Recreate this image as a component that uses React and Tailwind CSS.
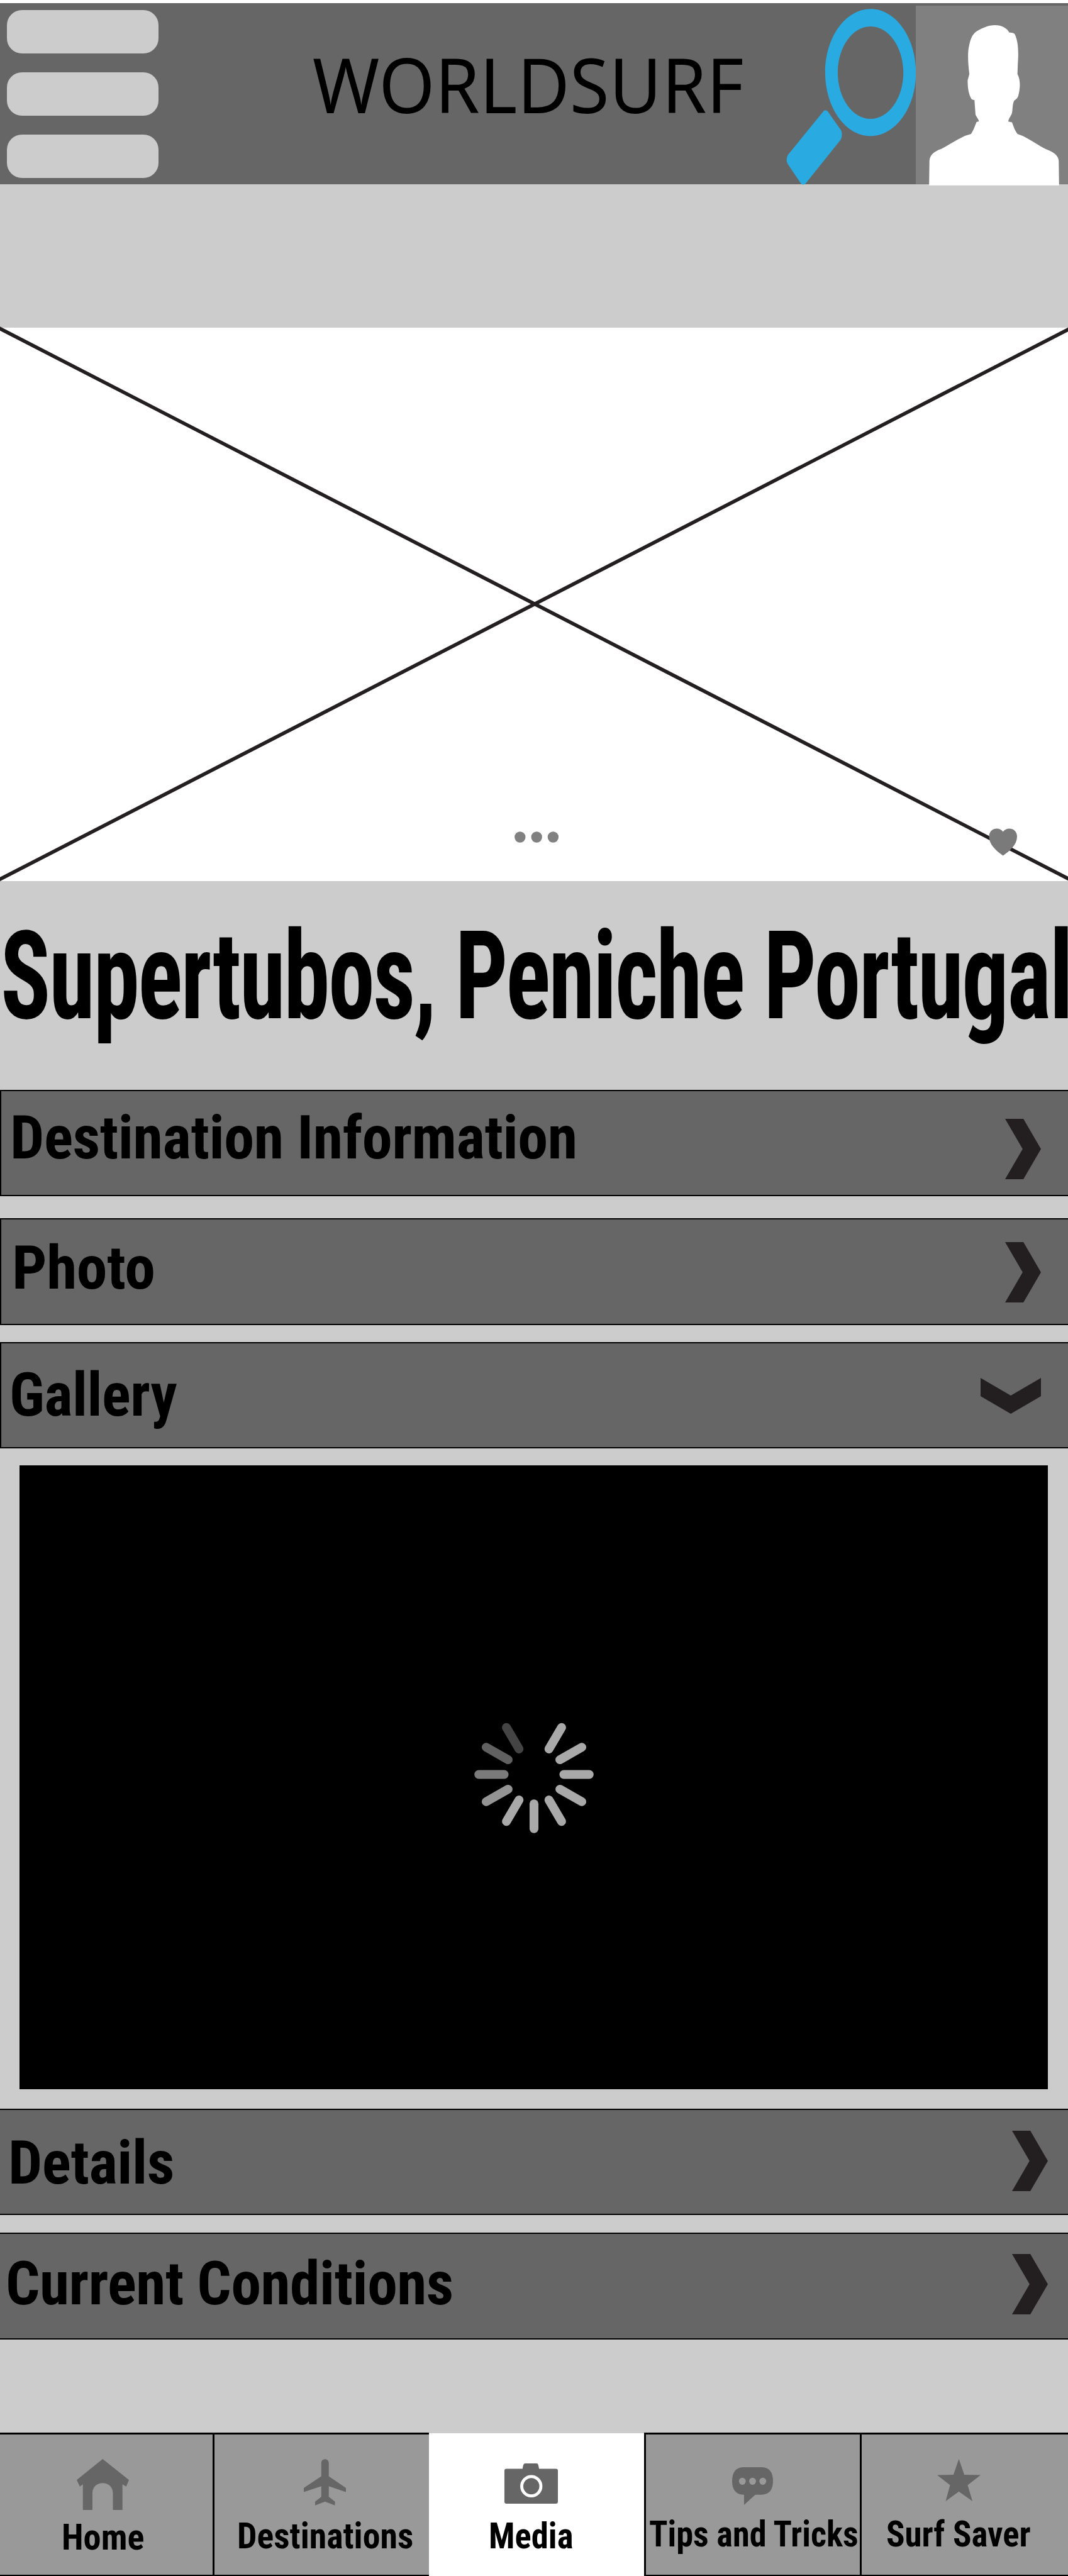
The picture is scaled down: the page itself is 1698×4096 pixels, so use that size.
import React, { useLayoutEffect, useRef, useState } from "react";

// Condenses or stretches a single line of text so that it spans its box.
function FitText({ className, children }) {
  const box = useRef(null);
  const text = useRef(null);
  const [scale, setScale] = useState(1);
  useLayoutEffect(() => {
    setScale(box.current.offsetWidth / text.current.offsetWidth);
  }, [children]);
  return (
    <div ref={box} className={`shrink-0 leading-none ${className}`}>
      <span
        ref={text}
        className="inline-block origin-left whitespace-nowrap align-top"
        style={{ transform: `scaleX(${scale})` }}
      >
        {children}
      </span>
    </div>
  );
}

function SearchIcon() {
  return (
    <svg className="mt-[6px] h-[285px] w-[207px]" viewBox="737 42 383 1066" preserveAspectRatio="none" fill="#29abe2">
      <path
        fillRule="evenodd"
        d="M987 54c73.500 0 133.500 169 133.500 378s-60 378-133.500 378s-133.500-169-133.500-378s60-378 133.500-378zM987 158c-53 0-96.500 123-96.500 275s43.500 275 96.500 275s96.500-123 96.500-275s-43.500-275-96.500-275z"
      />
      <path d="M849 661Q855 650 861 664L900 775Q906 802 899 832L796 1092Q789 1106 782 1092L744 978Q736 952 744 922Z" />
    </svg>
  );
}

function Avatar() {
  return (
    <svg className="mt-[4px] h-[286px] w-[243px]" viewBox="1120 33 448 1070" preserveAspectRatio="none">
      <path d="M1120 33H1568V1095H1120Z" fill="#808080" />
      <path
        fill="#fff"
        d="M1352 149C1376 150 1388 170 1394 193C1403 194 1409 196 1411 206C1422 255 1421 330 1419 380L1418 440C1427 475 1427 520 1420 573C1417 588 1412 592 1408 599C1402 625 1405 665 1400 682C1396 697 1392 707 1391 722L1402 727C1407 755 1411 778 1418 796L1434 808C1460 835 1480 865 1503 888C1525 905 1539 925 1539 960L1540 1102H1159L1160 960C1160 925 1172 900 1195 885C1218 860 1245 825 1264 807L1282 796C1289 775 1293 750 1298 725L1305 721C1304 705 1297 695 1295 680L1292 595L1284 590C1274 560 1272 515 1272 477L1277 440C1273 370 1271 310 1277 265C1281 225 1288 195 1303 180C1317 165 1332 149 1352 149Z"
      />
    </svg>
  );
}

function ChevronRight({ className }) {
  return (
    <svg className={`h-[96px] w-[57px] shrink-0 ${className}`} viewBox="0 0 71.500 119.500" preserveAspectRatio="none" fill="#231f20">
      <path d="M0 0H36.500L71.500 59.750L36.500 119.500H0L35 59.750Z" />
    </svg>
  );
}

function ChevronDown({ className }) {
  return (
    <svg className={`h-[57px] w-[96px] shrink-0 ${className}`} viewBox="0 0 119.500 71.500" preserveAspectRatio="none" fill="#231f20">
      <path d="M0 0L59.750 35L119.500 0V36.500L59.750 71.500L0 36.500Z" />
    </svg>
  );
}

function Row({ label, className, labelClass, chevronClass, open }) {
  return (
    <button className={`flex w-full shrink-0 items-start justify-between border-y-[2.500px] border-black bg-[#666] text-left text-[96.200px] font-bold tracking-[-0.005em] ${className}`}>
      <FitText className={labelClass}>{label}</FitText>
      {open ? <ChevronDown className={chevronClass} /> : <ChevronRight className={chevronClass} />}
    </button>
  );
}

const spokes = [
  [30, "#a9a9a9"], [60, "#a9a9a9"], [90, "#a9a9a9"], [120, "#a9a9a9"],
  [150, "#a9a9a9"], [180, "#a9a9a9"], [210, "#a9a9a9"], [240, "#949494"],
  [270, "#7b7b7b"], [300, "#616161"], [330, "#444444"],
];

function Spinner() {
  return (
    <svg className="h-[187px] w-[190px]" viewBox="-118 -118 236 236" preserveAspectRatio="none">
      {spokes.map(([angle, color]) => (
        <line key={angle} x1="0" y1="-59" x2="0" y2="-109" stroke={color} strokeWidth="17.500" strokeLinecap="round" transform={`rotate(${angle})`} />
      ))}
    </svg>
  );
}

function HomeIcon() {
  return (
    <svg className="ml-[122px] mt-[39px] h-[81px] w-[83px]" viewBox="225 228 153 301" preserveAspectRatio="none" fill="#666">
      <path d="M301 228L378 352L370 391L359 378V529H331V430C331 350 271 350 271 430V529H243V378L234 391L225 352Z" />
    </svg>
  );
}

function PlaneIcon() {
  return (
    <svg className="ml-[142px] mt-[39px] h-[74px] w-[67px]" viewBox="890 228 123 275" preserveAspectRatio="none" fill="#666">
      <path d="M941 252C941 221 963 221 963 252V330L1013 399V423L963 389V451L981 480V502L952 480L923 502V480L941 451V389L890 423V399L941 330Z" />
    </svg>
  );
}

function CameraIcon() {
  return (
    <svg className="ml-[120px] mt-[48px] h-[64px] w-[85px]" viewBox="1000 85 105 80" preserveAspectRatio="none" fill="#666">
      <path d="M1004 95.700H1035.500L1037 88Q1038 85 1041 85H1063Q1066 85 1066.500 88L1068 95.700H1101Q1105 95.700 1105 99.500V161Q1105 165 1101 165H1004Q1000 165 1000 161V99.500Q1000 95.700 1004 95.700Z" />
      <ellipse cx="1052.800" cy="130.300" rx="18.800" ry="19.300" fill="#666" stroke="#fff" strokeWidth="6" />
    </svg>
  );
}

function ChatIcon() {
  return (
    <svg className="ml-[137px] mt-[52px] h-[60px] w-[65px]" viewBox="580 278 120 223" preserveAspectRatio="none">
      <path fill="#666" d="M612 278H668Q700 282 700 360Q700 436 668 441H648L615 501V441H612Q580 436 580 360Q580 282 612 278Z" />
      <g fill="#999">
        <ellipse cx="610" cy="361" rx="10" ry="21" />
        <ellipse cx="640" cy="361" rx="10" ry="21" />
        <ellipse cx="670" cy="361" rx="10" ry="21" />
      </g>
    </svg>
  );
}

function StarIcon() {
  return (
    <svg className="ml-[120px] mt-[39px] h-[67px] w-[69px]" viewBox="1183 230 128 250" preserveAspectRatio="none" fill="#666">
      <path d="M1247 230L1263 323L1311 325L1273 385L1287 480L1247 423L1208 480L1221 385L1183 325L1231 323Z" />
    </svg>
  );
}

const tab = "flex h-full shrink-0 flex-col items-start border-black text-[56.800px] font-bold";

export default function App() {
  return (
    <div className="flex h-[4096px] w-[1698px] flex-col overflow-hidden bg-[#ccc] font-['Roboto_Condensed','Roboto',sans-serif] text-black [font-stretch:75%]">
      <header className="flex h-[293px] shrink-0 items-start border-t-[5px] border-white bg-[#666]">
        <div className="ml-[11px] mt-[11px] flex w-[241px] shrink-0 flex-col gap-[30px]">
          <span className="h-[69px] rounded-[24px] bg-[#ccc]" />
          <span className="h-[69px] rounded-[24px] bg-[#ccc]" />
          <span className="h-[69px] rounded-[24px] bg-[#ccc]" />
        </div>
        <FitText className="ml-[245px] mt-[68px] w-[686px] font-['Noto_Sans',sans-serif] text-[121.300px] [font-stretch:100%]">WORLDSURF</FitText>
        <div className="ml-[66px] flex shrink-0">
          <SearchIcon />
          <Avatar />
        </div>
      </header>

      <section className="relative mt-[228px] h-[880px] shrink-0 bg-white">
        <svg className="block h-full w-full overflow-visible" viewBox="0 0 1698 880">
          <g stroke="#231f20" strokeWidth="5.700">
            <path d="M-4 -0.500L1702 878M-4 879L1702 1" />
          </g>
          <g fill="#808080">
            <ellipse cx="826.800" cy="810" rx="8.700" ry="8.700" />
            <ellipse cx="853.200" cy="810" rx="8.700" ry="8.700" />
            <ellipse cx="879.400" cy="810" rx="8.700" ry="8.700" />
            <path fill="#7a7a7a" d="M1594.700 839.500C1584 832 1572.500 822 1572.500 809C1572.500 796 1588 792.500 1594.700 801.500C1601.400 792.500 1617 796 1617 809C1617 822 1605.500 832 1594.700 839.500Z" />
          </g>
        </svg>
      </section>

      <h1 className="flex h-[332px] shrink-0 overflow-hidden text-[194.500px] font-bold tracking-[-0.015em]">
        <FitText className="ml-[1px] mt-[55px] w-[1703px]">Supertubos, Peniche Portugal</FitText>
      </h1>

      <Row label="Destination Information" className="h-[169px] border-l-2" labelClass="ml-[14px] mt-[26px] w-[902px]" chevronClass="mr-[43px] mt-[44px]" />
      <Row label="Photo" className="mt-[35px] h-[170px] border-l-2" labelClass="ml-[17px] mt-[29px] w-[227px]" chevronClass="mr-[43px] mt-[36px]" />
      <Row label="Gallery" className="mt-[27px] h-[169px] border-l-2" labelClass="ml-[13px] mt-[34px] w-[266px]" chevronClass="mr-[43px] mt-[55px]" open />

      <section className="ml-[31px] mt-[27px] flex h-[992px] w-[1635px] shrink-0 items-center justify-center bg-black pb-[10px]">
        <Spinner />
      </section>

      <Row label="Details" className="mt-[31px] h-[169px]" labelClass="ml-[13px] mt-[36px] w-[264px]" chevronClass="mr-[32px] mt-[33px]" />
      <Row label="Current Conditions" className="mt-[28px] h-[170px]" labelClass="ml-[9px] mt-[31px] w-[712px]" chevronClass="mr-[32px] mt-[32px]" />

      <nav className="mt-auto flex h-[228px] shrink-0">
        <div className={`${tab} w-[341px] border-b-2 border-r-[3px] border-t-[3px] bg-[#999]`}>
          <HomeIcon />
          <FitText className="ml-[98px] mt-[16px] w-[131px]">Home</FitText>
        </div>
        <div className={`${tab} w-[341px] border-b-2 border-t-[3px] bg-[#999]`}>
          <PlaneIcon />
          <FitText className="ml-[36px] mt-[21px] w-[280px]">Destinations</FitText>
        </div>
        <div className={`${tab} w-[342px] border-t border-t-[#ccc] bg-white`}>
          <CameraIcon />
          <FitText className="ml-[95px] mt-[24px] w-[134px]">Media</FitText>
        </div>
        <div className={`${tab} w-[346px] border-x-[3px] border-b-2 border-t-[3px] bg-[#999]`}>
          <ChatIcon />
          <FitText className="ml-[5px] mt-[19px] w-[333px]">Tips and Tricks</FitText>
        </div>
        <div className={`${tab} w-[328px] border-b-2 border-t-[3px] bg-[#999]`}>
          <StarIcon />
          <FitText className="ml-[39px] mt-[25px] w-[230px]">Surf Saver</FitText>
        </div>
      </nav>
    </div>
  );
}
